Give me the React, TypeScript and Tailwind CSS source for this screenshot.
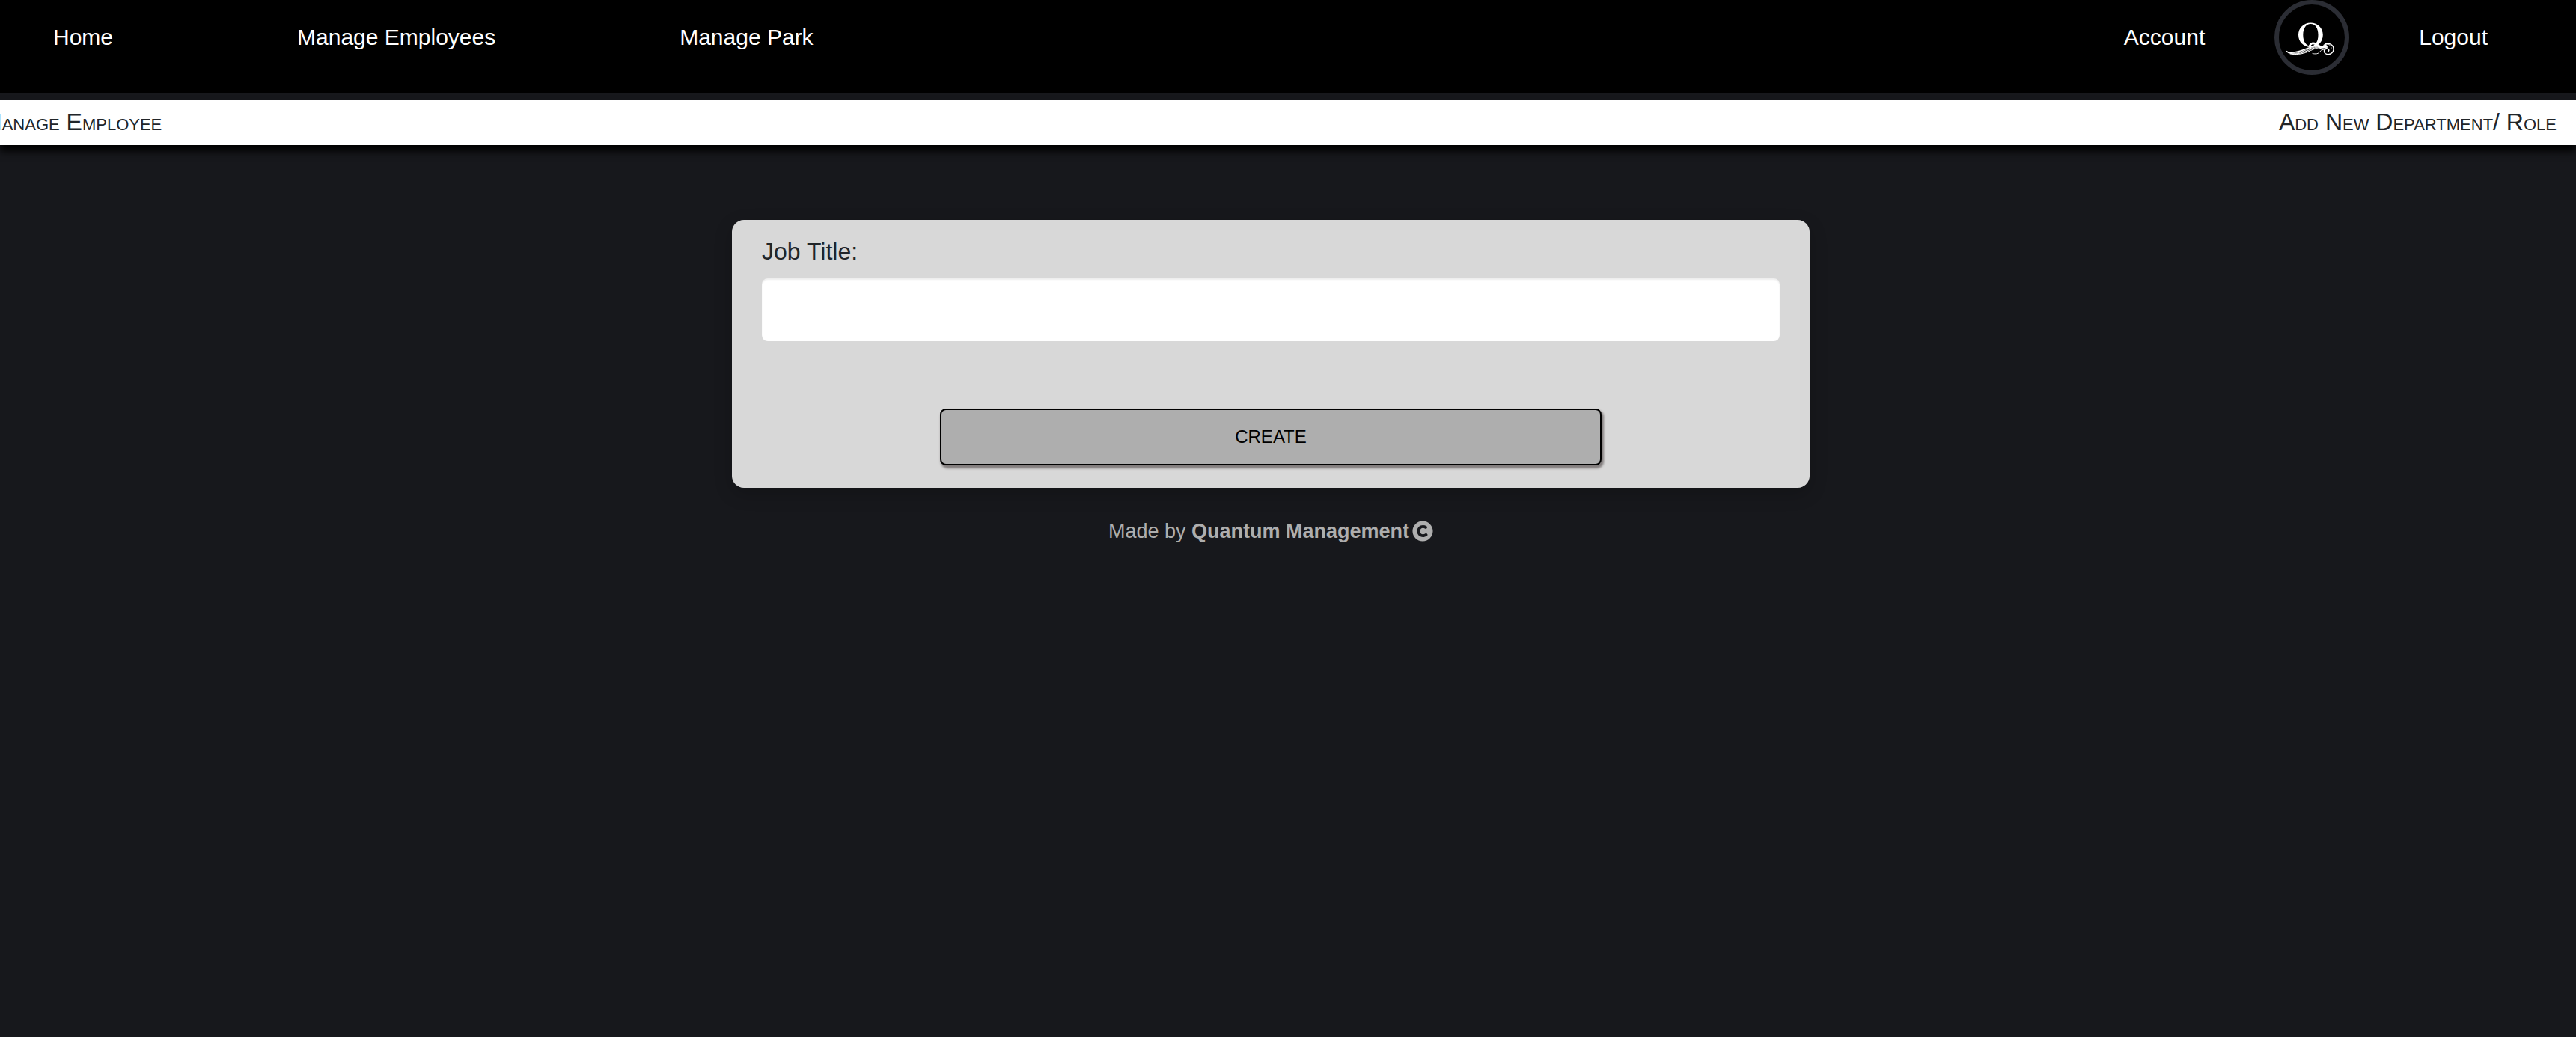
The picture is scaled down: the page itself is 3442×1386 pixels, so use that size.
import React from "react";
import { FaCopyright } from "react-icons/fa";

function Logo() {
  return (
    <svg viewBox="0 0 100 100" className="block size-full" role="img" aria-label="Quantum">
      <circle cx="50" cy="50" r="47" fill="#000" stroke="#2b2d34" strokeWidth="6" />
      <path
        fill="#fff"
        fillRule="evenodd"
        d="M48.500 30.500c9.400 0 16.300 7 16.300 16.300S57.900 63 48.500 63 32 56 32 46.800 39 30.500 48.500 30.500Zm0 1.600c-6.300 0-10.200 6-10.200 14.700s3.900 14.700 10.200 14.700 10-6 10-14.700-3.700-14.700-10-14.700Z"
      />
      <g fill="none" stroke="#fff" strokeLinecap="round">
        <path d="M16 68.500c3 2.500 9 2 15 .5 9-2 16-6.500 28-8.500" strokeWidth="1.500" />
        <path d="M16.500 69c6 3 13 2.500 19 .5 8-2.500 15-7 25-8" strokeWidth="1" />
        <path d="M18 70.500c7 2.500 15 1.500 22-1 7-2.500 13-6.500 21-7" strokeWidth="1" />
        <path d="M21 72c8 1.300 16 .3 23-2.500 6-2.500 11-5.500 17-6" strokeWidth="1" />
        <path d="M47 61.500c1.500-4 5-4.500 8-2.500 5 3 9 5.500 14 3.500" strokeWidth="2.600" />
        <path d="M57 61c3 3 8 6 12 4 2-1.500 1.500-4-1-4.500" strokeWidth="1.500" />
        <path d="M66 60.500c5-4.500 13-1.500 13 5 0 6-7 9-11 6-3-2.500-1.500-6 1.500-6.500 3-.3 4.500 2.500 2 4" strokeWidth="1.400" />
        <path d="M68 59.500c4-1.500 8 1 8 5" strokeWidth="0.800" />
        <path d="M51 71.500c4 1 8 .5 10-2.500 1-1.800 2-2.500 4-2.500" strokeWidth="0.900" />
      </g>
    </svg>
  );
}

function Header() {
  return (
    <header className="h-[124px] bg-black">
      <nav className="flex h-[100px] items-center justify-between pr-[118px] pl-[71px] text-[30px] leading-[40px] text-white">
        <div className="flex items-center gap-[246px]">
          <a href="#home">Home</a>
          <a href="#employees">Manage Employees</a>
          <a href="#park">Manage Park</a>
        </div>
        <div className="flex items-center gap-[93px]">
          <a href="#account">Account</a>
          <a href="#profile" className="size-[100px]">
            <Logo />
          </a>
          <a href="#logout">Logout</a>
        </div>
      </nav>
    </header>
  );
}

function SubNav() {
  return (
    <nav className="mt-[10px] flex h-[60px] items-center justify-between bg-white pr-[26px] pb-[2px] text-[32px] leading-[40px] text-[#212529] shadow-[0_8px_10px_#000] [font-variant:small-caps]">
      <a href="#manage-employee" className="-ml-[24px]">
        Manage Employee
      </a>
      <a href="#add-role">Add New Department/ Role</a>
    </nav>
  );
}

export default function App() {
  return (
    <div className="min-h-screen overflow-x-hidden bg-[#17181c] font-['Liberation_Sans',Arial,sans-serif]">
      <Header />
      <SubNav />
      <main className="flex flex-col items-center pt-[100px] pr-[46px]">
        <form
          className="flex w-full max-w-[1440px] flex-col rounded-[16px] bg-[#d8d8d8] px-[40px] pt-[22px] pb-[30px] shadow-[0_8px_24px_rgba(0,0,0,0.2)]"
          onSubmit={(e) => e.preventDefault()}
        >
          <label htmlFor="job-title" className="mb-[16px] text-[32px] leading-[40px] text-[#212529]">
            Job Title:
          </label>
          <input
            id="job-title"
            type="text"
            className="h-[84px] w-full rounded-[8px] bg-white px-[24px] text-[32px] text-[#212529] shadow-[inset_0_2px_2px_rgba(0,0,0,0.07)] outline-none"
          />
          <button
            type="submit"
            className="mt-[90px] h-[76px] w-[65%] self-center rounded-[8px] border-2 border-black bg-[#aeaeae] text-[24px] text-black shadow-[2px_3px_3px_1px_#827d7d]"
          >
            CREATE
          </button>
        </form>
        <footer className="mt-[38px] flex items-center text-[27px] leading-[40px] text-[#aeaeae]">
          <p>
            Made by <strong className="font-bold">Quantum Management</strong>
          </p>
          <FaCopyright className="ml-[4px] size-[28px]" />
        </footer>
      </main>
    </div>
  );
}
